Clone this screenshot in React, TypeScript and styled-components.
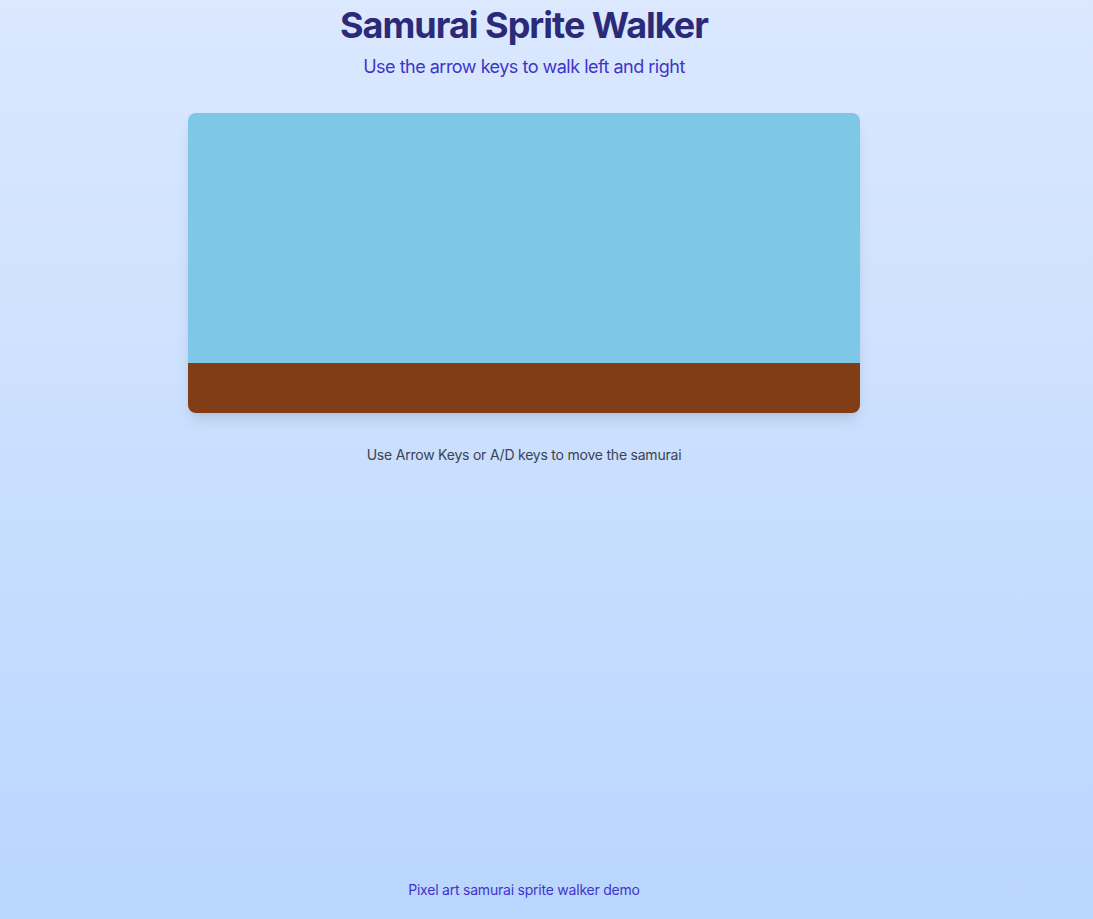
import React from "react";
import styled, { createGlobalStyle } from "styled-components";

const Global = createGlobalStyle`
  html, body { margin: 0; padding: 0; }
  body {
    font-family: Inter, "Noto Sans", sans-serif;
    background: linear-gradient(to bottom, #dbe8fe, #b9d6fe);
    min-height: 100vh;
  }
  #root { min-height: 100vh; }
`;

const Page = styled.div`
  min-height: 100vh;
  width: 1048px;
  display: flex;
  flex-direction: column;
  align-items: center;
  box-sizing: border-box;
  padding-top: 5px;
`;

const Main = styled.main`
  flex: 1;
  display: flex;
  flex-direction: column;
  align-items: center;
`;

const Title = styled.h1`
  margin: 0 0 8px;
  font-size: 36px;
  line-height: 40px;
  font-weight: 700;
  color: #2b2a78;
  letter-spacing: -1px;
`;

const Subtitle = styled.p`
  margin: 0 0 32px;
  font-size: 18px;
  line-height: 28px;
  color: #3f35c8;
  letter-spacing: -0.5px;
`;

const Stage = styled.div`
  width: 672px;
  height: 300px;
  border-radius: 8px;
  overflow: hidden;
  display: flex;
  flex-direction: column;
  box-shadow: 0 10px 15px -3px rgba(0, 0, 0, 0.1), 0 4px 6px -4px rgba(0, 0, 0, 0.1);
`;

const Sky = styled.div`
  flex: 1;
  background: #7ec7e7;
`;

const Ground = styled.div`
  height: 50px;
  background: #813d16;
`;

const Hint = styled.p`
  margin: 32px 0 0;
  font-size: 14px;
  line-height: 20px;
  color: #3b4352;
  letter-spacing: -0.22px;
`;

const Footer = styled.footer`
  padding: 12px 0 19px;
  font-size: 14px;
  line-height: 20px;
  color: #3f35c8;
  letter-spacing: -0.22px;
`;

export default function App() {
  return (
    <>
      <Global />
      <Page>
        <Main>
          <Title>Samurai Sprite Walker</Title>
          <Subtitle>Use the arrow keys to walk left and right</Subtitle>
          <Stage>
            <Sky />
            <Ground />
          </Stage>
          <Hint>Use Arrow Keys or A/D keys to move the samurai</Hint>
        </Main>
        <Footer>Pixel art samurai sprite walker demo</Footer>
      </Page>
    </>
  );
}
